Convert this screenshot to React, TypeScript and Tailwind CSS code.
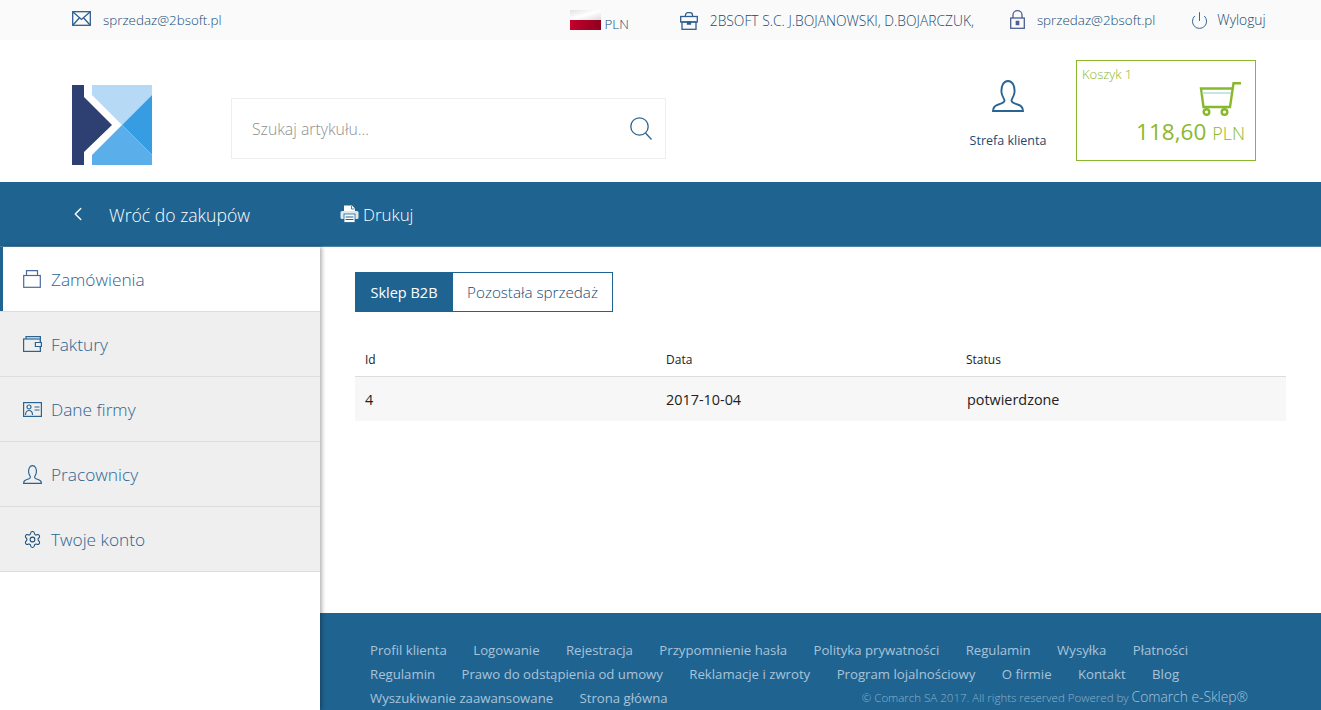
import { ChevronLeft, Power, Settings } from 'lucide-react';
import type { ReactNode } from 'react';

const FOOTER_ROWS = [
  ['Profil klienta', 'Logowanie', 'Rejestracja', 'Przypomnienie hasła', 'Polityka prywatności', 'Regulamin', 'Wysyłka', 'Płatności'],
  ['Regulamin', 'Prawo do odstąpienia od umowy', 'Reklamacje i zwroty', 'Program lojalnościowy', 'O firmie', 'Kontakt', 'Blog'],
];

function MailIcon() {
  return (
    <svg width="19" height="15" viewBox="0 0 19 15" fill="none" stroke="#2f5f8f" strokeWidth="1.3">
      <rect x="0.7" y="0.7" width="17.6" height="13.6" />
      <path d="M1 1l8.500 7.500L18 1M1 14l6.300-7M18 14l-6.300-7" />
    </svg>
  );
}

function CaseIcon() {
  return (
    <svg width="18" height="18" viewBox="0 0 18 18" fill="none" stroke="#2f5f8f" strokeWidth="1.3">
      <path d="M5.500 4.500V3c0-1.300 1-2.300 2.300-2.300h2.400c1.300 0 2.300 1 2.300 2.300v1.500" />
      <rect x="0.700" y="4.500" width="16.600" height="5.500" />
      <rect x="2" y="10" width="14" height="7.300" />
      <path d="M7.500 10h3v2h-3z" fill="#2f5f8f" />
    </svg>
  );
}

function BagIcon() {
  return (
    <svg width="18" height="18" viewBox="0 0 18 18" fill="none" stroke="#4b6a9b" strokeWidth="1.2">
      <path d="M3.500 5.500V.7h11v4.800" />
      <rect x="0.700" y="5.500" width="16.600" height="11.800" />
    </svg>
  );
}

function LockIcon() {
  return (
    <svg width="15" height="19" viewBox="0 0 15 19" fill="none" stroke="#4b5f94" strokeWidth="1.3">
      <path d="M3 8V5c0-2.500 2-4.300 4.500-4.300S12 2.500 12 5v3" />
      <rect x="0.700" y="8" width="13.600" height="10.300" />
      <path d="M6.300 11.500h2.400v3H6.300z" fill="#4b5f94" />
    </svg>
  );
}

function SearchIcon() {
  return (
    <svg width="22" height="23" viewBox="0 0 22 23" fill="none" stroke="#2b6492" strokeWidth="1.300">
      <circle cx="9.500" cy="9.500" r="8.700" />
      <path d="M15.500 16l6 6.500" />
    </svg>
  );
}

function PersonIcon({ size = 32 }: { size?: number }) {
  return (
    <svg width={size} height={size} viewBox="0 0 32 32" fill="none" stroke="#2b6492" strokeWidth="1.900">
      <path d="M1 31c0-4 2-5.500 5.500-6.500 4-1.200 6-2.300 6-4 0-1.500-2.500-4-3-8C9 6 11.500 1 16 1s7 5 6.500 11.500c-.5 4-3 6.500-3 8 0 1.700 2 2.800 6 4 3.500 1 5.500 2.500 5.500 6.500z" />
    </svg>
  );
}

function WalletIcon() {
  return (
    <svg width="19" height="16" viewBox="0 0 19 16" fill="none" stroke="#2b6492" strokeWidth="1.200">
      <path d="M3 3V.6h14.400V13" />
      <rect x="0.600" y="3" width="16.800" height="12.400" />
      <path d="M18.400 6.500h-6v4h6z" fill="#efefef" />
    </svg>
  );
}

function CardIcon() {
  return (
    <svg width="19" height="15" viewBox="0 0 19 15" fill="none" stroke="#2b6492" strokeWidth="1.200">
      <rect x="0.600" y="0.600" width="17.800" height="13.800" />
      <circle cx="6" cy="5" r="2" />
      <path d="M2.500 13c0-3 1.800-4.500 3.500-4.500S9.500 10 9.500 13M11.500 5h5M11.500 8h5" />
    </svg>
  );
}

function CartIcon() {
  return (
    <svg width="42" height="34" viewBox="0 0 42 34" fill="none" stroke="#8ab82c" strokeWidth="2.400">
      <path d="M42 1.300h-7.500L31 25H4.500L2 6.500h31" />
      <path d="M3 11h29" stroke="#b4dcd8" strokeWidth="1.500" />
      <circle cx="7.500" cy="30" r="2.800" />
      <circle cx="25.500" cy="30" r="2.800" />
    </svg>
  );
}

function PrinterIcon() {
  return (
    <svg width="19" height="18" viewBox="0 0 19 18" className="shrink-0">
      <path d="M4 .5h8l3 3V8H4z" fill="#ffffff" />
      <path d="M11.500 1v3h3" fill="none" stroke="#1f6391" strokeWidth="0.800" />
      <rect x="0.500" y="6" width="18" height="8" rx="1.500" fill="#dbe8f1" />
      <rect x="4" y="9" width="11" height="8.500" fill="#ffffff" stroke="#1f6391" strokeWidth="0.800" />
      <path d="M5.500 12h8M5.500 14.500h8" stroke="#1f6391" strokeWidth="1" />
    </svg>
  );
}

function Logo() {
  return (
    <svg width="80" height="80" viewBox="0 0 80 80" className="shrink-0">
      <path d="M0 0h12v12l28 28-28 27v13H0z" fill="#2e3f72" />
      <path d="M20 0h60v10L50 40 20 10z" fill="#b6d9f6" />
      <path d="M80 10v60L50 40z" fill="#369de2" />
      <path d="M50 40l30 30v10H20V70z" fill="#5aaeea" />
    </svg>
  );
}

function SideItem({ icon, label, active }: { icon: ReactNode; label: string; active?: boolean }) {
  return (
    <div
      className={`flex h-[65px] items-center border-b border-[#dddddd] pl-[20px] text-[17.3px] ${
        active ? 'bg-white shadow-[inset_3px_0_0_#1f6391]' : 'bg-[#efefef]'
      }`}
    >
      <span className="flex w-[31px] items-center pl-[3px]">{icon}</span>
      <span className="pt-[2px] font-light text-[#2b6492]">{label}</span>
    </div>
  );
}

export default function App() {
  return (
    <div className="flex h-[710px] flex-col overflow-hidden bg-white font-['Open_Sans',sans-serif] text-[#174a75]">
      <div className="flex h-10 items-center bg-[#fafafa] text-[13.4px] font-light">
        <div className="ml-[72px] flex items-center gap-[12px]">
          <div className="mb-[3px]"><MailIcon /></div>
          <span>sprzedaz@2bsoft.pl</span>
        </div>
        <div className="ml-[349px] flex items-center">
          <div className="flex h-5 w-[31px] flex-col">
            <div className="h-1/2 bg-linear-to-br from-[#e2e2e2] via-white to-[#dddddd]" />
            <div className="h-1/2 bg-linear-to-r from-[#c4002b] to-[#8f0020]" />
          </div>
          <span className="ml-[3px] mt-[8px]">PLN</span>
        </div>
        <div className="ml-[51px] flex items-center gap-[12px] pt-[2px]">
          <CaseIcon />
          <span className="text-[13.8px]">2BSOFT S.C. J.BOJANOWSKI, D.BOJARCZUK,</span>
        </div>
        <div className="ml-[36px] flex items-center gap-[12px]">
          <LockIcon />
          <span>sprzedaz@2bsoft.pl</span>
        </div>
        <div className="ml-[35px] flex items-center gap-[8px]">
          <Power size={19} strokeWidth={1.2} className="text-[#2f5f8f]" />
          <span className="text-[13.800px]">Wyloguj</span>
        </div>
      </div>

      <div className="flex h-[142px] items-center pl-[72px]">
        <div className="mt-[28px]"><Logo /></div>
        <div className="ml-[79px] mt-[35px] flex h-[61px] w-[435px] items-center justify-between border border-[#eeeeee] pl-[20px] pr-[13px]">
          <span className="pt-[3px] text-[15.800px] font-light text-[#8f8f8f]">Szukaj artykułu...</span>
          <SearchIcon />
        </div>
        <div className="ml-[303px] mt-[8px] flex w-[78px] flex-col items-center">
          <PersonIcon />
          <span className="mt-[20px] whitespace-nowrap text-[12.500px]">Strefa klienta</span>
        </div>
        <div className="ml-[29px] mt-[-1px] flex h-[101px] w-[180px] flex-col border border-[#8ab82c] px-[5px] text-[#8ab82c]">
          <span className="mt-[4px] text-[13px] font-light">Koszyk 1</span>
          <div className="mr-[9px] mt-[-3px] self-end"><CartIcon /></div>
          <div className="mr-[5px] mt-[-1px] self-end whitespace-nowrap">
            <span className="text-[22.500px]">118,60</span>
            <span className="ml-[6px] text-[18px] font-light">PLN</span>
          </div>
        </div>
      </div>

      <div className="flex h-[65px] items-center border-b border-[#4d84a8] bg-[#1f6391] pl-[67px] text-white">
        <ChevronLeft size={22} strokeWidth={1.6} />
        <span className="ml-[20px] pt-[2px] text-[17.600px] font-light">Wróć do zakupów</span>
        <div className="ml-[90px]"><PrinterIcon /></div>
        <span className="ml-[4px] pt-[2px] text-[16.900px] font-light">Drukuj</span>
      </div>

      <div className="flex flex-1">
        <div className="relative z-10 w-[320px] shrink-0 shadow-[2px_0_4px_rgba(0,0,0,0.3)]">
          <SideItem active label="Zamówienia" icon={<BagIcon />} />
          <SideItem label="Faktury" icon={<WalletIcon />} />
          <SideItem label="Dane firmy" icon={<CardIcon />} />
          <SideItem label="Pracownicy" icon={<PersonIcon size={19} />} />
          <SideItem label="Twoje konto" icon={<Settings size={19} strokeWidth={1.3} />} />
        </div>

        <div className="flex min-w-0 flex-1 flex-col">
          <div className="flex-1 pl-[35px] pr-[35px] pt-[25px]">
            <div className="flex">
              <div className="flex h-10 w-[98px] items-center justify-center bg-[#1f6391] pt-[1px] text-[14.500px] text-white">Sklep B2B</div>
              <div className="flex h-10 w-[160px] items-center justify-center border border-l-0 border-[#1f6391] pt-[1px] text-[15.200px] font-light">Pozostała sprzedaż</div>
            </div>
            <div className="mt-[32px] grid h-[33px] grid-cols-[301px_300px_1fr] items-center border-b border-[#dddddd] pl-[10px] text-[12px] text-[#222222]">
              <span>Id</span>
              <span>Data</span>
              <span>Status</span>
            </div>
            <div className="grid h-[44px] grid-cols-[301px_301px_1fr] items-center bg-[#f7f7f7] pl-[10px] pt-[1px] text-[14.400px] text-[#222222]">
              <span>4</span>
              <span>2017-10-04</span>
              <span>potwierdzone</span>
            </div>
          </div>

          <div className="h-[97px] bg-[#1f6391] pl-[50px] pt-[25px] text-[13.200px] leading-[24px] text-[#a9c4d8]">
            {FOOTER_ROWS.map((row, i) => (
              <div key={i} className="flex gap-[26.400px] whitespace-nowrap">
                {row.map((link) => <span key={link}>{link}</span>)}
              </div>
            ))}
            <div className="mt-[-1px] flex items-center justify-between whitespace-nowrap pr-[73px]">
              <div className="flex gap-[26.400px]">
                <span>Wyszukiwanie zaawansowane</span>
                <span>Strona główna</span>
              </div>
              <span className="text-[11.500px] font-light text-[#8fb0c8]">
                © Comarch SA 2017. All rights reserved Powered by <span className="text-[13.800px] text-[#a9c4d8]">Comarch e-Sklep®</span>
              </span>
            </div>
          </div>
        </div>
      </div>
    </div>
  );
}
